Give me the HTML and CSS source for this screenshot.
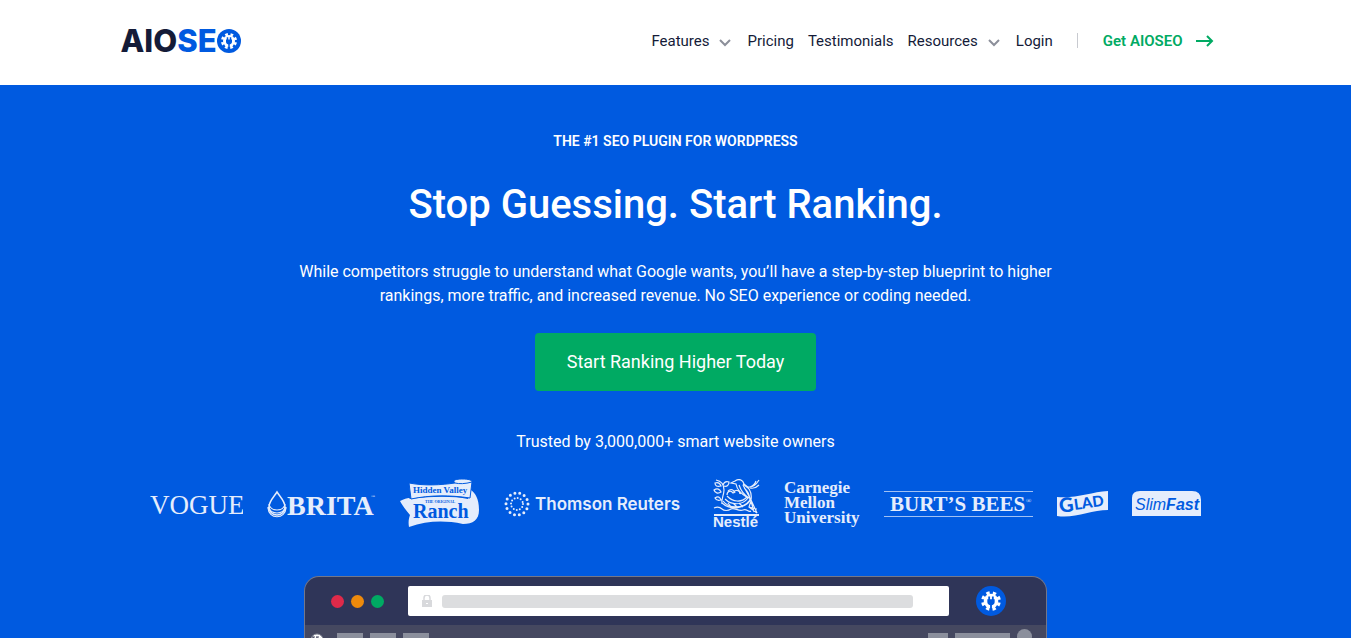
FILE: index.html
```html
<!DOCTYPE html>
<html lang="en">
<head>
  <meta charset="UTF-8">
  <meta name="viewport" content="width=device-width, initial-scale=1.0">
  <title>AIOSEO</title>
  <link rel="stylesheet" href="styles.css">
</head>
<body>
  <!-- Gear with plug, shared by the logo and the browser mockup -->
  <svg class="sprite" aria-hidden="true">
    <symbol id="gear" viewBox="0 0 24 24">
      <circle cx="12" cy="12" r="8" fill="#fff"/>
      <circle cx="12" cy="12" r="9" fill="none" stroke="#fff" stroke-width="3.500" stroke-dasharray="3.600 3.468" stroke-dashoffset="-1.734"/>
      <path fill="#005ae0" d="M8 10h1V7h2v3h2V7h2v3h1v3c0 2-1.200 3-3 3.500V24h-2v-7.500c-1.800-.5-3-1.500-3-3.500z"/>
    </symbol>
    <symbol id="chevron" viewBox="0 0 12 8">
      <path d="M1 1l5 5 5-5" fill="none" stroke="#8c8f9a" stroke-width="2"/>
    </symbol>
  </svg>

  <header class="header">
    <div class="container header-inner">
      <a href="#" class="logo" aria-label="AIOSEO">
        <span>AIO</span><span class="logo-blue">SE</span>
        <span class="badge"><svg><use href="#gear"/></svg></span>
      </a>
      <nav class="nav">
        <a href="#">Features <svg class="chevron"><use href="#chevron"/></svg></a>
        <a href="#">Pricing</a>
        <a href="#">Testimonials</a>
        <a href="#">Resources <svg class="chevron"><use href="#chevron"/></svg></a>
        <a href="#">Login</a>
        <a href="#" class="nav-cta">Get AIOSEO
          <svg width="18" height="12" viewBox="0 0 18 12"><path d="M0 6h16M11 1l5 5-5 5" fill="none" stroke="#00aa63" stroke-width="2"/></svg>
        </a>
      </nav>
    </div>
  </header>

  <main class="hero">
    <p class="tagline">THE #1 SEO PLUGIN FOR WORDPRESS</p>
    <h1>Stop Guessing. Start Ranking.</h1>
    <p class="lead">While competitors struggle to understand what Google wants, you’ll have a step-by-step blueprint to higher rankings, more traffic, and increased revenue. No SEO experience or coding needed.</p>
    <a href="#" class="btn">Start Ranking Higher Today</a>
    <p class="trusted">Trusted by 3,000,000+ smart website owners</p>

    <div class="brands">
      <svg width="93" height="50" viewBox="0 0 93 50" class="serif">
        <text x="0" y="35" font-size="27">VOGUE</text>
      </svg>

      <svg width="109" height="50" viewBox="0 0 109 50" class="serif">
        <path d="M10 13C7 18 2 22 2 28a8 8 0 0 0 16 0c0-6-5-10-8-15z" fill="none" stroke="#e5edfc" stroke-width="1.500"/>
        <path d="M2 25c1 8 15 8 16 0M2 28c1 8 15 8 16 0M1 28c0 13 18 13 18 0" fill="none" stroke="#e5edfc" stroke-width="1.200"/>
        <text x="20" y="36" font-size="28" font-weight="700">BRITA</text>
        <text x="104" y="19" font-size="4">™</text>
      </svg>

      <svg width="80" height="50" viewBox="0 0 80 50" class="serif">
        <path d="M0 22c4-2 7-3 9-3l1 1c22-3 44-3 58 0l3-9c4 3 8 8 8 20 0 10-6 14-16 14-20-4-36-3-54 3-1-5 0-9 1-12-3-4-7-8-10-14z"/>
        <path d="M9 4c16 3 32 2 46 0-3-3 1-4 8-4 5 0 9 1 9 3L70 19c-20-3-40-3-59 1z" stroke="#005ae0" stroke-width="1"/>
        <path d="M55 4c4 1 10 1 17-1" fill="none" stroke="#005ae0"/>
        <g class="knockout" font-weight="700">
          <text x="13" y="14" font-size="9">Hidden Valley</text>
          <text x="25" y="24" font-size="4">THE ORIGINAL</text>
          <text x="13" y="39" font-size="20">Ranch</text>
        </g>
      </svg>

      <svg width="185" height="50" viewBox="0 0 185 50">
        <g fill="none" stroke="#e5edfc" stroke-linecap="round">
          <circle cx="13" cy="25" r="11" stroke-width="3" stroke-dasharray="0 4.935"/>
          <circle cx="13" cy="25" r="6" stroke-width="2" stroke-dasharray="0 3.142"/>
        </g>
        <text x="31" y="31" font-family="Inter" font-size="17" font-weight="600">Thomson Reuters</text>
      </svg>

      <svg width="47" height="50" viewBox="0 0 47 50">
        <g fill="none" stroke="#e5edfc" stroke-width="1.200">
          <path d="M1 29c4-2 6-1 8 1s6 2 9 0 8 3 12 1 5 3 8 1"/>
          <path d="M3 1c5 1 8 5 8 10s-3 9-2 14M2 4c3-1 5 0 6 3-4 1-6 0-6-3zM1 11c3-2 6-1 7 2-3 2-6 1-7-2zM2 19c3-2 5-1 6 2-3 1-5 0-6-2zM10 6c1-3 3-4 6-3 0 3-2 5-5 4"/>
          <path d="M12 20c6 6 17 7 23-1M10 22c6 8 20 8 27-1M14 17c6 6 14 7 20 1M9 24c8 7 21 7 29-3M15 24l4 5m1-5l5 5m1-5l4 4"/>
          <path d="M14 16c0-4 4-5 6-2 2-4 7-3 7 1M15 12c3-3 6-1 7 2M25 11l3 4"/>
          <path d="M22 2c4-3 8-1 9 3 6 4 8 10 7 16l6 13-8-6 2-6M22 2l-4 2 5 1c1 6 5 10 12 14M26 6c2 6 5 10 10 13M30 6l8 15M31 9c4 3 6 7 6 13M38 22l3 11M36 28l8 2"/>
          <path d="M34 8c5 1 9-2 12-7M37 8c3-1 5-3 6-6M37 9c4 1 6 0 9-3M30 5l5 4"/>
        </g>
        <text x="0" y="48" class="nestle">Nestlé</text>
        <path d="M1 35h45v2H1z"/>
      </svg>

      <svg width="76" height="50" viewBox="0 0 76 50" class="serif" font-weight="700">
        <text x="0" y="14" font-size="17">Carnegie</text>
        <text x="0" y="29" font-size="17">Mellon</text>
        <text x="0" y="44" font-size="17">University</text>
      </svg>

      <svg width="149" height="50" viewBox="0 0 149 50" class="serif">
        <path d="M0 12h149v1H0zM0 37h149v1H0z" opacity=".7"/>
        <text x="6" y="32" font-size="21" font-weight="700">BURT’S BEES</text>
        <text x="142" y="24" font-size="7">®</text>
      </svg>

      <svg width="51" height="50" viewBox="0 0 51 50">
        <path d="M0 18c18 2 34-5 51-6v19c-17 0-34 9-51 6z"/>
        <g class="knockout" font-family="Lato" font-weight="900" transform="rotate(-8 3 34)">
          <text x="3" y="34" font-size="20">G</text>
          <text x="18" y="33" font-size="15">LAD</text>
        </g>
      </svg>

      <svg width="69" height="50" viewBox="0 0 69 50">
        <path d="M0 37V19q0-7 8-7h52q9 0 9 9v16z"/>
        <text x="3" y="31" class="knockout slimfast">Slim<tspan font-weight="700">Fast</tspan></text>
      </svg>
    </div>

    <div class="browser" aria-hidden="true">
      <div class="browser-bar">
        <div class="dots"><span class="red"></span><span class="orange"></span><span class="green"></span></div>
        <div class="address">
          <svg width="10" height="12" viewBox="0 0 10 12"><path d="M2 6V3a3 3 0 0 1 6 0v3" fill="none" stroke="#d8d9dc" stroke-width="1.500"/><path d="M0 5h10v7H0z" fill="#d8d9dc"/><path d="M4 8h2v1H4z" fill="#fff"/></svg>
          <span class="url"></span>
        </div>
        <span class="badge badge-lg"><svg><use href="#gear"/></svg></span>
      </div>
      <div class="admin-bar">
        <svg width="14" height="14" viewBox="0 0 14 14"><circle cx="7" cy="7" r="6" fill="#fff" stroke="#8b8f9c"/><path d="M2 4h3M3 4l2 7 2-6 2 6 2-6M6 4h3" fill="none" stroke="#454860" stroke-width="1.200"/></svg>
        <span class="item"></span><span class="item"></span><span class="item"></span>
        <span class="item item-sm"></span><span class="item item-lg"></span><span class="avatar"></span>
      </div>
    </div>
  </main>
</body>
</html>
```
FILE: styles.css
```css
:root {
  --blue: #005ae0;
  --green: #00aa63;
  --navy: #141b38;
  --logo-tint: #e5edfc;
}

* {
  box-sizing: border-box;
  margin: 0;
  padding: 0;
}

body {
  font-family: Roboto, sans-serif;
  font-size: 16px;
  line-height: 24px;
  color: var(--navy);
  padding-right: 2px;
  background: #fff;
  min-height: 100vh;
  display: flex;
  flex-direction: column;
}

a {
  color: inherit;
  text-decoration: none;
}

.sprite {
  display: none;
}

/* Header */
.header {
  padding: 24px 0 28px;
}

.container {
  width: 100%;
  max-width: 1140px;
  margin: 0 auto;
  padding: 0 32px 0 15px;
}

.header-inner {
  display: flex;
  align-items: center;
  justify-content: space-between;
  height: 33px;
}

.logo {
  display: flex;
  align-items: center;
  font-family: Inter, sans-serif;
  font-size: 31px;
  font-weight: 800;
}

.logo-blue {
  color: var(--blue);
}

.badge {
  display: flex;
  align-items: center;
  justify-content: center;
  width: 24px;
  height: 24px;
  border-radius: 50%;
  background: var(--blue);
}

.badge svg {
  width: 18px;
  height: 18px;
}

.nav {
  display: flex;
  align-items: center;
  gap: 14px;
  font-size: 15px;
}

.nav a {
  display: flex;
  align-items: center;
}

.chevron {
  width: 12px;
  height: 8px;
  margin: 4px 2px 0 10px;
}

.nav-cta {
  color: var(--green);
  font-weight: 600;
  gap: 13px;
  margin-left: 10px;
}

.nav-cta::before {
  content: "";
  width: 1px;
  height: 15px;
  margin-right: 12px;
  background: #c8cad0;
}

/* Hero */
.hero {
  flex: 1;
  height: 553px;
  overflow: hidden;
  display: flex;
  flex-direction: column;
  align-items: center;
  padding-top: 44px;
  background: var(--blue);
  color: #fff;
  text-align: center;
}

.hero > * {
  flex-shrink: 0;
}

.tagline {
  font-size: 14px;
  font-weight: 600;
}

h1 {
  margin: 24px 0 27px;
  font-size: 40px;
  font-weight: 500;
  line-height: 56px;
}

.lead {
  max-width: 760px;
}

.btn {
  margin: 25px 0 39px;
  padding: 17px 32px;
  border-radius: 4px;
  background: var(--green);
  font-size: 18px;
}

.trusted {
  margin-bottom: 25px;
}

.brands {
  display: flex;
  justify-content: center;
  gap: 24px;
}

.brands svg {
  fill: var(--logo-tint);
}

.serif {
  font-family: "Liberation Serif", serif;
}

.brands .knockout {
  fill: var(--blue);
}

.nestle {
  font: 700 15px "Liberation Sans", sans-serif;
}

.slimfast {
  font: italic 16px "Liberation Sans", sans-serif;
}

/* Browser mockup */
.browser {
  width: 55%;
  flex: 1 0 62px;
  margin-top: 47px;
  display: flex;
  flex-direction: column;
  border: 1px solid #73778a;
  border-bottom: 0;
  border-radius: 15px 15px 0 0;
  background: #2f3558;
  overflow: hidden;
}

.browser-bar {
  display: flex;
  flex-shrink: 0;
  align-items: center;
  height: 48px;
  padding: 0 40px 0 26px;
}

.dots {
  display: flex;
  gap: 7px;
}

.dots span {
  width: 13px;
  height: 13px;
  border-radius: 50%;
}

.red {
  background: #df2a4a;
}

.orange {
  background: #ee8a0c;
}

.green {
  background: var(--green);
}

.address {
  flex: 1;
  display: flex;
  align-items: center;
  gap: 10px;
  height: 30px;
  margin: 0 27px 0 24px;
  padding: 0 36px 0 14px;
  border-radius: 2px;
  background: #fff;
}

.url {
  flex: 1;
  height: 13px;
  border-radius: 3px;
  background: #dcdddf;
}

.badge-lg {
  width: 30px;
  height: 30px;
}

.badge-lg svg {
  width: 22px;
  height: 22px;
}

.admin-bar {
  flex: 1;
  display: flex;
  align-items: flex-start;
  gap: 7px;
  padding: 8px 14px 0 5px;
  background: #454860;
}

.admin-bar svg {
  margin-right: 6px;
}

.item {
  width: 26px;
  height: 12px;
  background: #8b8f9c;
}

.item-sm {
  width: 20px;
  margin-left: auto;
}

.item-lg {
  width: 55px;
}

.avatar {
  width: 15px;
  height: 15px;
  margin: -4px 0 0;
  border-radius: 50%;
  background: #8b8f9c;
}
```
